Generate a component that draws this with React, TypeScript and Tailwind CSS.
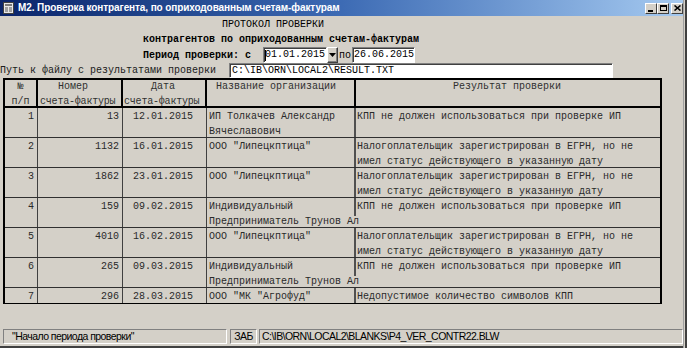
import React from "react";

const mono = { fontFamily: '"Liberation Mono", "Courier New", monospace' };
const sans = { fontFamily: 'Tahoma, "Liberation Sans", Arial, sans-serif' };

type Row = [string, string, string, string[], string[]];

const R1 = ["КПП не должен использоваться при проверке ИП"];
const R2 = [
  "Налогоплательщик зарегистрирован в ЕГРН, но не",
  "имел статус действующего в указанную дату",
];

const rows: Row[] = [
  ["1", "13", "12.01.2015", ["ИП Толкачев Александр", "Вячеславович"], R1],
  ["2", "1132", "16.01.2015", ['ООО "Липецкптица"'], R2],
  ["3", "1862", "23.01.2015", ['ООО "Липецкптица"'], R2],
  ["4", "159", "09.02.2015", ["Индивидуальный", "Предприниматель Трунов Ал"], R1],
  ["5", "4010", "16.02.2015", ['ООО "Липецкптица"'], R2],
  ["6", "265", "09.03.2015", ["Индивидуальный", "Предприниматель Трунов Ал"], R1],
  ["7", "296", "28.03.2015", ['ООО "МК "Агрофуд"'], ["Недопустимое количество символов КПП"]],
];

function TitleButton({ children, className = "" }: { children: React.ReactNode; className?: string }) {
  return (
    <div
      className={
        "w-[12px] h-[11px] bg-[#d4d0c8] border border-t-white border-l-white border-b-[#404040] border-r-[#404040] flex items-center justify-center " +
        className
      }
    >
      {children}
    </div>
  );
}

export default function App() {
  return (
    <div className="w-[687px] h-[348px] bg-[#d4d0c8] flex overflow-hidden text-[#1a1a1a]">
      <div className="w-[683px] h-[348px] flex flex-col">
        {/* Title bar */}
        <div className="h-[16px] shrink-0 bg-linear-to-r from-[#0a246a] via-[#3d6bb4] to-[#a6caf0] flex items-center pl-[3px] pr-[0px]">
          <svg width="11" height="12" viewBox="0 0 11 12" className="shrink-0">
            <rect x="0.5" y="0.5" width="10" height="11" fill="#e8e8e8" stroke="#404040" />
            <rect x="2" y="2" width="7" height="2" fill="#7a7a7a" />
            <rect x="2" y="5" width="3" height="5" fill="#a0a0a0" />
            <rect x="6" y="5" width="3" height="5" fill="#a0a0a0" />
          </svg>
          <span className="ml-[4px] text-white font-bold text-[10px] leading-[16px] whitespace-nowrap tracking-[-0.1px]" style={sans}>
            М2. Проверка контрагента, по оприходованным счетам-фактурам
          </span>
          <div className="ml-auto flex items-center">
            <TitleButton>
              <div className="w-[5px] h-[2px] bg-black mt-[5px] -ml-[1px]" />
            </TitleButton>
            <TitleButton>
              <div className="w-[7px] h-[6px] border border-black border-t-2" />
            </TitleButton>
            <TitleButton className="ml-[2px]">
              <svg width="7" height="6" viewBox="0 0 7 6">
                <path d="M0.5 0.5 L6.5 5.5 M6.5 0.5 L0.5 5.5" stroke="black" strokeWidth="1.6" />
              </svg>
            </TitleButton>
          </div>
        </div>

        {/* Heading lines */}
        <div className="h-[17px] shrink-0 pl-[222px] text-[10px] leading-[17px] whitespace-pre text-black" style={mono}>
          ПРОТОКОЛ ПРОВЕРКИ
        </div>
        <div className="h-[14px] shrink-0 pl-[143px] text-[10px] leading-[14px] whitespace-pre text-black font-bold" style={mono}>
          контрагентов по оприходованным счетам-фактурам
        </div>
        <div className="h-[16px] shrink-0 pl-[143px] flex items-center text-[10px] whitespace-pre text-black" style={mono}>
          <span className="w-[114px] font-bold">Период проверки: с</span>
          <div className="ml-[6px] w-[64px] h-[16px] bg-white border border-t-[#808080] border-l-[#808080] border-b-white border-r-white shadow-[inset_1px_1px_0_#404040] flex items-center pl-[1px] relative">
            <div className="absolute left-[1px] top-[2px] w-[1px] h-[11px] bg-black" />
            <span className="leading-[14px]">01.01.2015</span>
          </div>
          <div className="w-[11px] h-[16px] bg-[#d4d0c8] border border-t-white border-l-white border-b-[#404040] border-r-[#404040] shadow-[inset_-1px_-1px_0_#808080] flex items-center justify-center">
            <svg width="7" height="4" viewBox="0 0 7 4">
              <path d="M0 0 H7 L3.5 4 Z" fill="black" />
            </svg>
          </div>
          <span className="ml-[1px] w-[13px]">по</span>
          <div className="w-[63px] h-[16px] bg-white border border-t-[#808080] border-l-[#808080] border-b-white border-r-white shadow-[inset_1px_1px_0_#404040] flex items-center pl-[1px]">
            <span className="leading-[14px]">26.06.2015</span>
          </div>
        </div>
        <div className="h-[15px] shrink-0 flex items-center text-[10px] whitespace-pre" style={mono}>
          <span className="w-[216px] text-[#202020]">Путь к файлу с результатами проверки</span>
          <div className="ml-[13px] w-[384px] h-[15px] bg-white border border-t-[#808080] border-l-[#808080] border-b-white border-r-white shadow-[inset_1px_1px_0_#404040] flex items-center pl-[2px] text-black">
            C:\IB\ORN\LOCAL2\RESULT.TXT
          </div>
        </div>

        {/* Table */}
        <div
          className="ml-[3px] w-[659px] h-[226px] shrink-0 border-t-2 border-l-2 border-r-2 border-b border-black overflow-hidden text-[10px] leading-[15px] text-[#2a2a2a]"
          style={mono}
        >
          <div className="h-[28px] flex border-b-2 border-black text-[#303030]">
            <div className="w-[33px] border-r-2 border-black text-center -mt-[1px]">
              <div>№</div>
              <div>п/п</div>
            </div>
            <div className="w-[85px] border-r-2 border-black -mt-[1px] whitespace-pre">
              <div className="pl-[20px]">Номер</div>
              <div className="pl-[2px] tracking-[-0.2px]">счета-фактуры</div>
            </div>
            <div className="w-[84px] border-r-2 border-black -mt-[1px] whitespace-pre">
              <div className="pl-[28px]">Дата</div>
              <div className="pl-[1px] tracking-[-0.2px]">счета-фактуры</div>
            </div>
            <div className="w-[149px] border-r-2 border-black -mt-[1px] whitespace-pre pl-[9px]">
              Название организации
            </div>
            <div className="w-[304px] -mt-[1px] whitespace-pre pl-[97px]">Результат проверки</div>
          </div>
          {rows.map((r, i) => (
            <div key={i} className="h-[30px] shrink-0 flex border-b border-[#303030]">
              <div className="w-[33px] border-r border-[#404040] text-right pr-[3px] pt-[1px]">{r[0]}</div>
              <div className="w-[85px] border-r border-[#404040] text-right pr-[3px] pt-[1px]">{r[1]}</div>
              <div className="w-[84px] border-r border-[#404040] pl-[10px] pt-[1px]">{r[2]}</div>
              <div className="w-[149px] border-r-2 border-[#505050] pl-[2px] pt-[1px] whitespace-pre relative overflow-visible">
                {r[3].map((t, j) => (
                  <div key={j}>
                    <span className="relative z-10 bg-[#d4d0c8]">{t}</span>
                  </div>
                ))}
              </div>
              <div className="w-[304px] pl-[1px] pt-[1px] whitespace-pre">
                {r[4].map((t, j) => (
                  <div key={j}>{t}</div>
                ))}
              </div>
            </div>
          ))}
        </div>

        <div className="flex-1" />

        {/* Status bar */}
        <div className="h-[15px] shrink-0 flex items-stretch text-[10.5px] tracking-[-0.55px] text-black" style={sans}>
          <div className="ml-[3px] w-[224px] border border-t-[#808080] border-l-[#808080] border-b-white border-r-white pl-[8px] leading-[13px] whitespace-pre">
            "Начало периода проверки"
          </div>
          <div className="ml-[3px] w-[27px] border border-t-[#808080] border-l-[#808080] border-b-white border-r-white text-center leading-[13px]">
            ЗАБ
          </div>
          <div className="ml-[2px] flex-1 border border-t-[#808080] border-l-[#808080] border-b-white border-r-white pl-[2px] leading-[13px] whitespace-pre">
            C:\IB\ORN\LOCAL2\BLANKS\P4_VER_CONTR22.BLW
          </div>
        </div>
        <div className="h-[4px] shrink-0 border-b-2 border-[#404040] border-t border-t-[#d4d0c8]" />
      </div>
      <div className="w-[4px] h-[348px] border-l border-[#a0a0a0] border-r-2 border-r-[#404040]" />
    </div>
  );
}
